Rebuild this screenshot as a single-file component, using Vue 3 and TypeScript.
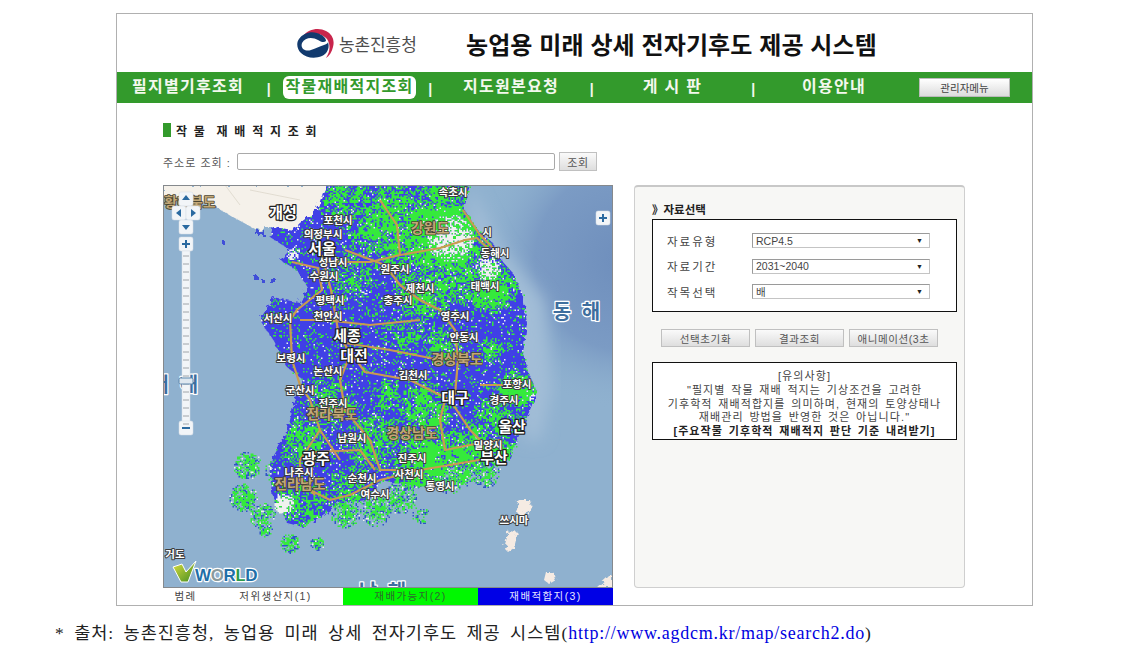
<script setup lang="ts">
type Pt = [number, number]

const navItems = ['필지별기후조회', '작물재배적지조회', '지도원본요청', '게 시 판', '이용안내']
const fields = [
  { label: '자료유형', value: 'RCP4.5' },
  { label: '자료기간', value: '2031~2040' },
  { label: '작목선택', value: '배' },
]
const buttons = ['선택초기화', '결과조회', '애니메이션(3초']

// map outline, in page coordinates (viewBox starts at the map's corner)
const land: Pt[] = [
  [327, 185], [470, 185], [463, 207], [477, 230], [493, 243], [503, 262], [513, 273], [523, 297], [527, 323],
  [523, 353], [527, 370], [537, 393], [527, 417], [517, 440], [507, 460], [493, 467], [473, 468], [450, 467],
  [440, 480], [420, 487], [380, 480], [367, 500], [340, 503], [320, 517], [303, 527], [287, 523], [278, 505],
  [270, 490], [273, 457], [287, 433], [293, 407], [303, 380], [287, 367], [273, 340], [260, 320], [273, 297],
  [300, 303], [307, 287], [297, 270], [280, 260], [290, 250], [270, 237], [273, 227], [293, 230], [300, 223],
  [317, 210], [323, 193],
]
const landPath = 'M' + land.map((p) => p.join(' ')).join('L') + 'Z'

// [x, y, radius, density]: where the green cells gather
const zones: number[][] = [
  [442, 235, 48, 1.1], [395, 225, 50, 0.8], [345, 200, 28, 0.65], [440, 192, 30, 0.75], [492, 288, 26, 1],
  [425, 290, 34, 0.7], [460, 280, 26, 0.8], [350, 275, 26, 0.55], [430, 465, 40, 1], [470, 450, 30, 0.85],
  [375, 440, 30, 0.7], [425, 410, 30, 0.75], [495, 420, 26, 0.7], [515, 390, 20, 1], [440, 345, 22, 0.6],
  [405, 335, 24, 0.5], [300, 440, 26, 0.7], [330, 400, 26, 0.65], [350, 490, 26, 0.7], [300, 505, 26, 0.6],
  [490, 350, 14, 0.75], [505, 455, 16, 1], [385, 395, 18, 0.55],
]
const islands: number[][] = [
  [247, 465, 14, 0.6], [243, 497, 14, 0.65], [262, 515, 13, 0.6], [290, 543, 10, 0.75], [317, 543, 7, 0.6],
  [345, 513, 15, 0.65], [375, 510, 16, 0.6], [400, 497, 16, 0.55], [450, 482, 12, 0.7], [462, 472, 14, 0.7],
  [485, 472, 15, 0.55], [265, 530, 7, 0.6], [277, 470, 13, 0.6], [420, 515, 9, 0.35], [283, 503, 10, 0.3],
]
// snow-white patches in the high ground and round Seoul
const pale: number[][] = [
  [450, 238, 24, 0.75], [488, 268, 13, 0.75], [293, 253, 7, 0.6], [283, 503, 11, 0.95], [528, 395, 6, 0.3],
]

let seed = 20310
function rnd(): number {
  seed = (seed * 16807) % 2147483647
  return seed / 2147483647
}

function inside(x: number, y: number, poly: Pt[]): boolean {
  let hit = false
  for (let i = 0, j = poly.length - 1; i < poly.length; j = i++) {
    const [xi, yi] = poly[i]
    const [xj, yj] = poly[j]
    if (yi > y !== yj > y && x < ((xj - xi) * (y - yi)) / (yj - yi) + xi) hit = !hit
  }
  return hit
}

function densityAt(x: number, y: number, list: number[][]): number {
  let d = 0
  for (const [zx, zy, r, a] of list) {
    const t = Math.hypot(x - zx, y - zy) / r
    if (t < 1) d = Math.max(d, a * (1 - t * t * 0.7))
  }
  return d
}

// small clumps: a coarse random lattice, blended
const lattice: number[] = Array.from({ length: 120 * 120 }, () => rnd())
function clump(x: number, y: number): number {
  const gx = (x - 200) / 4
  const gy = (y - 180) / 4
  const ix = Math.floor(gx)
  const iy = Math.floor(gy)
  const fx = gx - ix
  const fy = gy - iy
  const at = (a: number, b: number) => lattice[b * 120 + a] ?? 0.5
  const top = at(ix, iy) * (1 - fx) + at(ix + 1, iy) * fx
  const low = at(ix, iy + 1) * (1 - fx) + at(ix + 1, iy + 1) * fx
  return top * (1 - fy) + low * fy
}

let green = ''
let white = ''
let deep = ''
const step = 1.5
for (let y = 185; y < 560; y += step) {
  for (let x = 225; x < 545; x += step) {
    const on = inside(x + (rnd() - 0.5) * 3, y + (rnd() - 0.5) * 3, land)
    const base = on ? Math.max(0.12, densityAt(x, y, zones)) : densityAt(x, y, islands)
    if (base === 0) continue
    const d = base + (clump(x, y) - 0.5) * 0.7 * Math.min(1, base * 2)
    const w = densityAt(x, y, pale)
    const cell = `M${x} ${y}h1.5v1.5h-1.5z`
    const r = rnd()
    if (r < w) white += cell
    else if (r < w + d) green += cell
    else if (r < w + d + 0.035) white += cell
    else if (!on && r < w + d + 0.22) deep += cell
  }
}

const roads = [
  'M322 255L331 290L338 330L345 345L365 372L410 380L450 400L470 430L490 450',
  'M292 262L318 268L322 290L297 310L290 320L292 360L300 385L310 400L320 430L340 460',
  'M325 262L370 262L400 255L440 248L465 240L477 238L490 250',
  'M345 250L385 265L400 285L420 300L440 310L455 330L458 360L455 395',
  'M352 350L340 380L345 410L370 440L380 470L420 470',
  'M310 490L330 500L350 495L380 480L420 470L450 465L490 458',
  'M320 430L300 460L300 480L315 495M315 452L360 450L375 470',
  'M463 210L480 235L495 250M480 385L520 385M500 440L470 445L445 450L440 420L445 400',
  'M300 320L325 320L370 325L420 320M345 343L390 350L440 360M400 255L397 225L380 200',
]

const cities = [
  ['속초시', 453, 191], ['포천시', 338, 219], ['의정부시', 323, 233], ['성남시', 333, 261], ['수원시', 324, 275],
  ['평택시', 330, 299], ['천안시', 328, 315], ['서산시', 278, 317], ['보령시', 291, 357], ['논산시', 328, 370],
  ['군산시', 300, 389], ['전주시', 333, 402], ['남원시', 352, 437], ['나주시', 299, 471], ['순천시', 362, 477],
  ['여수시', 375, 493], ['동해시', 495, 252], ['원주시', 395, 268], ['태백시', 485, 285], ['제천시', 420, 287],
  ['충주시', 398, 299], ['영주시', 455, 315], ['안동시', 464, 336], ['김천시', 413, 374], ['포항시', 517, 383],
  ['경주시', 504, 399], ['밀양시', 488, 444], ['진주시', 412, 457], ['사천시', 409, 473], ['통영시', 440, 485],
  ['쓰시마', 514, 519], ['거도', 175, 553], ['시', 487, 231],
] as const
const bigCities = [
  ['개성', 283, 211], ['서울', 322, 247], ['세종', 347, 334], ['대전', 354, 354], ['광주', 316, 457],
  ['대구', 455, 396], ['울산', 512, 425], ['부산', 494, 456],
] as const
const provinces = [
  ['황해북도', 190, 201], ['강원도', 430, 227], ['경상북도', 457, 358], ['경상남도', 412, 432],
  ['전라북도', 332, 413], ['전라남도', 300, 483],
] as const
const seas = [
  ['동 해', 578, 310], ['서 해', 176, 383], ['남 해', 384, 590],
] as const

const ticks = Array.from({ length: 22 }, (_, i) => 256 + i * 8)
</script>

<template>
  <div class="page">
    <div class="frame">
      <header class="top">
        <svg class="emblem" viewBox="0 0 37 31" width="37" height="31">
          <path d="M6 8C11 1 22-1 29 3C35 6 38 12 36 19C35 24 32 28 29 30C33 24 34 17 30 11C25 5 14 3 6 8Z" fill="#c8254c" />
          <path d="M2 11C6 5 14 3 20 5C26 7 29 10 29 13C27 15 24 14 21 12C16 9 8 9 5 15C3 21 9 24 14 22C19 20 22 19 27 17C30 16 31 15 31 14C33 20 30 26 25 28C18 31 9 30 4 25C0 21-1 15 2 11Z" fill="#123a6e" />
        </svg>
        <span class="agency">농촌진흥청</span>
        <h1 class="title">농업용 미래 상세 전자기후도 제공 시스템</h1>
      </header>

      <nav class="nav">
        <template v-for="(item, i) in navItems" :key="item">
          <span v-if="i > 0" class="sep">|</span>
          <span class="nav-cell"><a class="nav-item" :class="{ active: i === 1 }">{{ item }}</a></span>
        </template>
        <button class="admin">관리자메뉴</button>
      </nav>

      <main class="content">
        <div class="heading"><i class="mark"></i><span>작 물&nbsp; 재 배 적 지 조 회</span></div>
        <div class="search">
          <span class="search-label">주소로 조회 :</span>
          <input class="search-input" type="text" />
          <button class="btn search-btn">조회</button>
        </div>

        <div class="columns">
          <section class="map-col">
            <svg class="map" viewBox="163 185 450 403" width="450" height="403">
              <defs>
                <radialGradient id="eastSea" gradientUnits="userSpaceOnUse" cx="625" cy="260" r="150">
                  <stop offset="0" stop-color="#6e8ebc" />
                  <stop offset="0.6" stop-color="#7b9bc4" />
                  <stop offset="1" stop-color="#8fb1cf" stop-opacity="0" />
                </radialGradient>
                <filter id="soft"><feGaussianBlur stdDeviation="8" /></filter>
                <filter id="rough" x="-5%" y="-5%" width="110%" height="110%">
                  <feTurbulence type="fractalNoise" baseFrequency="0.22" numOctaves="2" seed="4" />
                  <feDisplacementMap in="SourceGraphic" scale="8" />
                </filter>
                <linearGradient id="vee" x1="0" y1="0" x2="1" y2="1">
                  <stop offset="0" stop-color="#e0e040" />
                  <stop offset="1" stop-color="#3f8a20" />
                </linearGradient>
              </defs>
              <rect x="163" y="185" width="450" height="403" fill="#8fb1cf" />
              <rect x="163" y="185" width="450" height="403" fill="url(#eastSea)" />
              <path d="M470 185L500 245L545 300L552 390L540 440L525 440L500 300L470 230Z" fill="#a2bdd7" filter="url(#soft)" />

              <path d="M163 185H327L323 193L317 210L300 223L293 230L273 227L257 230L233 217L217 207L190 200L163 197Z" fill="#f5f1ea" filter="url(#rough)" />
              <path d="M225 185L240 205M250 190L300 200" stroke="#d9d3c6" stroke-width="0.7" fill="none" />
              <path d="M520 500L530 500L532 508L522 516L516 512Z M509 530L518 532L514 548L508 552L504 548Z" fill="#f5ebe3" filter="url(#rough)" />
              <path d="M546 572L553 572L556 580L549 584L544 580Z M607 578L613 572V588H596Z" fill="#f5ebe3" filter="url(#rough)" />

              <path :d="landPath" fill="#3f3fe6" filter="url(#rough)" />
              <path d="M253 276h5v4h-5zM262 280h3v3h-3zM270 279h6v4h-6zM222 240h2v4h-2zM257 231h8v5h-8z" fill="#3f4fd8" filter="url(#rough)" />
              <path :d="deep" fill="#2f55c8" />
              <path :d="green" fill="#35ea3c" />
              <path :d="white" fill="#eef2ee" />

              <path v-for="r in roads" :key="r" :d="r" class="road" />

              <text v-for="c in provinces" :key="c[0]" :x="c[1]" :y="c[2]" class="map-label province">{{ c[0] }}</text>
              <text v-for="c in cities" :key="c[0]" :x="c[1]" :y="c[2]" class="map-label city">{{ c[0] }}</text>
              <text v-for="c in bigCities" :key="c[0]" :x="c[1]" :y="c[2]" class="map-label big">{{ c[0] }}</text>
              <text v-for="c in seas" :key="c[0]" :x="c[1]" :y="c[2]" class="map-label sea">{{ c[0] }}</text>

              <g class="ctrl">
                <rect x="179" y="192" width="14" height="14" rx="2" />
                <rect x="172" y="206" width="14" height="14" rx="2" />
                <rect x="186" y="206" width="14" height="14" rx="2" />
                <rect x="179" y="220" width="14" height="14" rx="2" />
                <rect x="179" y="237" width="14" height="14" rx="2" />
                <rect x="596" y="211" width="14" height="14" rx="2" />
                <rect x="182" y="251" width="8" height="171" />
                <rect x="179" y="421" width="14" height="14" rx="2" />
              </g>
              <g class="ticks"><path v-for="t in ticks" :key="t" :d="`M183 ${t}h6`" /></g>
              <rect x="179" y="378" width="14" height="6" rx="1.5" fill="#dfe8f0" stroke="#5d87ad" />
              <path class="glyph" d="M186 195l4 5h-8zM176 213l5-4v8zM196 213l-5-4v8zM186 230l-4-5h8z" />
              <path class="glyph" d="M185 240h2v3h3v2h-3v3h-2v-3h-3v-2h3zM602 214h2v3h3v2h-3v3h-2v-3h-3v-2h3zM182 427h8v2h-8z" />

              <path d="M173 567L182 564L186 572L196 561L188 582L181 582Z" fill="url(#vee)" stroke="#fff" stroke-width="1" />
              <text x="195" y="581" class="vworld"><tspan fill="#1f6fa8">W</tspan><tspan fill="#8a9a9c">O</tspan><tspan fill="#1f6fa8">R</tspan><tspan fill="#2c9a4a">L</tspan><tspan fill="#1f6fa8">D</tspan></text>
              <rect x="163.5" y="185.5" width="449" height="402" fill="none" stroke="#85898d" />
            </svg>
            <div class="legend">
              <span class="legend-head">범례</span>
              <span class="legend-cell">저위생산지(1)</span>
              <span class="legend-cell mid">재배가능지(2)</span>
              <span class="legend-cell high">재배적합지(3)</span>
            </div>
          </section>

          <aside class="panel">
            <div class="panel-title">》자료선택</div>
            <div class="select-box">
              <div v-for="f in fields" :key="f.label" class="field">
                <span class="field-label">{{ f.label }}</span>
                <div class="select"><span>{{ f.value }}</span><span class="arrow">▼</span></div>
              </div>
            </div>
            <div class="actions">
              <button v-for="b in buttons" :key="b" class="btn action">{{ b }}</button>
            </div>
            <div class="notice">
              <div>[유의사항]</div>
              <div>"필지별 작물 재배 적지는 기상조건을 고려한</div>
              <div>기후학적 재배적합지를 의미하며, 현재의 토양상태나</div>
              <div>재배관리 방법을 반영한 것은 아닙니다."</div>
              <div class="notice-link">[주요작물 기후학적 재배적지 판단 기준 내려받기]</div>
            </div>
          </aside>
        </div>
      </main>
    </div>

    <p class="source">* 출처: 농촌진흥청, 농업용 미래 상세 전자기후도 제공 시스템(<a class="url">http://www.agdcm.kr/map/search2.do</a>)</p>
  </div>
</template>

<style>
html,
body {
  margin: 0;
  background: #fff;
}
</style>

<style scoped>
.page {
  width: 1137px;
  height: 661px;
  overflow: hidden;
  padding-top: 13px;
  box-sizing: border-box;
  font-family: "Liberation Sans", "Noto Sans CJK KR", sans-serif;
  color: #333;
}

.frame {
  width: 917px;
  height: 593px;
  margin-left: 116px;
  box-sizing: border-box;
  border: 1px solid #b0b0b0;
  background: #fff;
}

.top {
  height: 58px;
  display: flex;
  align-items: center;
  padding-left: 180px;
}

.emblem {
  flex: none;
}

.agency {
  margin-left: 5px;
  font-size: 17px;
  letter-spacing: -0.1px;
  color: #4d4d4d;
  width: 127px;
}

.title {
  margin: 0;
  font-size: 24px;
  font-weight: 700;
  letter-spacing: 0.1px;
  color: #111;
  white-space: nowrap;
}

.nav {
  height: 31px;
  display: flex;
  align-items: center;
  background: #339a2c;
}

.nav-cell {
  width: 142px;
  display: flex;
  justify-content: center;
}

.nav-item {
  padding: 1px 3px 2px;
  border-radius: 6px;
  font-size: 16px;
  line-height: 20px;
  font-weight: 700;
  letter-spacing: 1.25px;
  color: #f3f8ee;
  white-space: nowrap;
}

.nav-item.active {
  background: #fff;
  color: #339a2c;
}

.sep {
  width: 19.5px;
  text-align: center;
  font-size: 14px;
  font-weight: 700;
  color: #f3f8ee;
  padding-top: 3px;
}

.admin {
  width: 91px;
  height: 19px;
  margin-left: 14px;
  padding: 0;
  border: 1px solid #bbb;
  background: linear-gradient(#fff, #dcdcdc);
  font: 10.5px "Liberation Sans", "Noto Sans CJK KR", sans-serif;
  color: #444;
}

.content {
  padding: 20px 0 0 46px;
}

.heading {
  display: flex;
  align-items: center;
  height: 14px;
  font-size: 12px;
  font-weight: 700;
  letter-spacing: 1.7px;
  color: #222;
}

.mark {
  width: 8px;
  height: 14px;
  margin-right: 5px;
  background: #339a2c;
}

.search {
  display: flex;
  align-items: center;
  height: 19px;
  margin-top: 15px;
}

.search-label {
  width: 74px;
  font-size: 11px;
  letter-spacing: 1px;
  color: #555;
  white-space: nowrap;
}

.search-input {
  width: 318px;
  height: 17px;
  box-sizing: border-box;
  padding: 0;
  border: 1px solid #a9a9a9;
  border-radius: 2px;
}

.btn {
  padding: 0;
  border: 1px solid #c0c0c0;
  background: linear-gradient(#fafafa, #dedede);
  font: 11px "Liberation Sans", "Noto Sans CJK KR", sans-serif;
  letter-spacing: 0.6px;
  color: #555;
  white-space: nowrap;
  overflow: hidden;
}

.search-btn {
  width: 38px;
  height: 19px;
  margin-left: 4px;
}

.columns {
  display: flex;
  gap: 21px;
  margin-top: 14px;
}

.map-col {
  width: 450px;
}

.map {
  display: block;
}

.road {
  fill: none;
  stroke: #c99a50;
  stroke-width: 2.2;
  stroke-linejoin: round;
}

.map-label {
  text-anchor: middle;
  dominant-baseline: central;
  paint-order: stroke;
  stroke-linejoin: round;
  font-family: "Noto Sans CJK KR", sans-serif;
}

.city {
  font-size: 10.5px;
  font-weight: 700;
  fill: #fff;
  stroke: #3d3d3d;
  stroke-width: 2px;
}

.big {
  font-size: 15px;
  font-weight: 700;
  fill: #fff;
  stroke: #222;
  stroke-width: 2.5px;
}

.province {
  font-size: 14px;
  font-weight: 700;
  fill: #c2a878;
  stroke: #4a4430;
  stroke-width: 1.6px;
}

.sea {
  font-size: 20px;
  font-weight: 700;
  letter-spacing: 3px;
  fill: #3e6e9e;
  stroke: #fff;
  stroke-width: 2.5px;
}

.ctrl rect {
  fill: #f2f5f8;
  stroke: #d5dde5;
  stroke-width: 0.5;
}

.ticks path {
  stroke: #8a8f94;
  stroke-width: 0.8;
}

.glyph {
  fill: #2b6aa0;
}

.vworld {
  font: 700 17px "Liberation Sans", sans-serif;
  letter-spacing: -0.4px;
  paint-order: stroke;
  stroke: #fff;
  stroke-width: 2.5px;
  stroke-linejoin: round;
}

.legend {
  display: grid;
  grid-template-columns: 45px 135px 135px 135px;
  height: 16px;
  font-size: 10.5px;
  letter-spacing: 1.4px;
  line-height: 17px;
  text-align: center;
  color: #444;
}

.legend-cell.mid {
  background: #00f800;
  color: #2d6b2d;
}

.legend-cell.high {
  background: #0000e6;
  color: #e6e6ff;
}

.panel {
  width: 331px;
  height: 403px;
  box-sizing: border-box;
  padding: 16px 7px 0 17px;
  border: 1px solid #cfcfcf;
  border-top: 2px solid #c8c8c8;
  border-radius: 4px;
  background: #f7f7f5;
}

.panel-title {
  font-size: 11.5px;
  line-height: 14px;
  font-weight: 700;
  color: #222;
  white-space: nowrap;
}

.select-box {
  height: 93px;
  box-sizing: border-box;
  margin-top: 2px;
  padding-top: 13px;
  border: 1px solid #111;
  background: #fff;
}

.field {
  display: flex;
  align-items: center;
  height: 15px;
  margin-bottom: 10.5px;
  padding-left: 14px;
}

.field-label {
  width: 85px;
  font-size: 11.5px;
  letter-spacing: 2px;
  color: #444;
}

.select {
  width: 178px;
  height: 15px;
  box-sizing: border-box;
  display: flex;
  justify-content: space-between;
  align-items: center;
  padding: 0 6px 0 3px;
  border: 1px solid #c4c4c4;
  border-top-color: #9a9a9a;
  border-left-color: #9a9a9a;
  font-size: 10.5px;
  color: #444;
}

.arrow {
  font-size: 7px;
  color: #222;
}

.actions {
  display: flex;
  gap: 5px;
  margin-top: 17px;
  padding-left: 9px;
}

.action {
  width: 89px;
  height: 18px;
  font-size: 10.5px;
}

.notice {
  width: 305px;
  height: 78px;
  box-sizing: border-box;
  margin-top: 15px;
  padding-top: 7px;
  border: 1px solid #111;
  background: #fff;
  font-size: 11px;
  letter-spacing: 1.1px;
  word-spacing: 1.5px;
  line-height: 13.8px;
  text-align: center;
  color: #444;
  white-space: nowrap;
}

.notice-link {
  font-weight: 700;
  color: #222;
}

.source {
  margin: 16px 0 0 55px;
  font-family: "Liberation Serif", "Noto Sans CJK KR", serif;
  font-size: 17.5px;
  line-height: 22px;
  letter-spacing: 1px;
  word-spacing: 4px;
  color: #222;
  white-space: nowrap;
}

.url {
  color: #0000e0;
  font-size: 18px;
  letter-spacing: 0.75px;
}
</style>
